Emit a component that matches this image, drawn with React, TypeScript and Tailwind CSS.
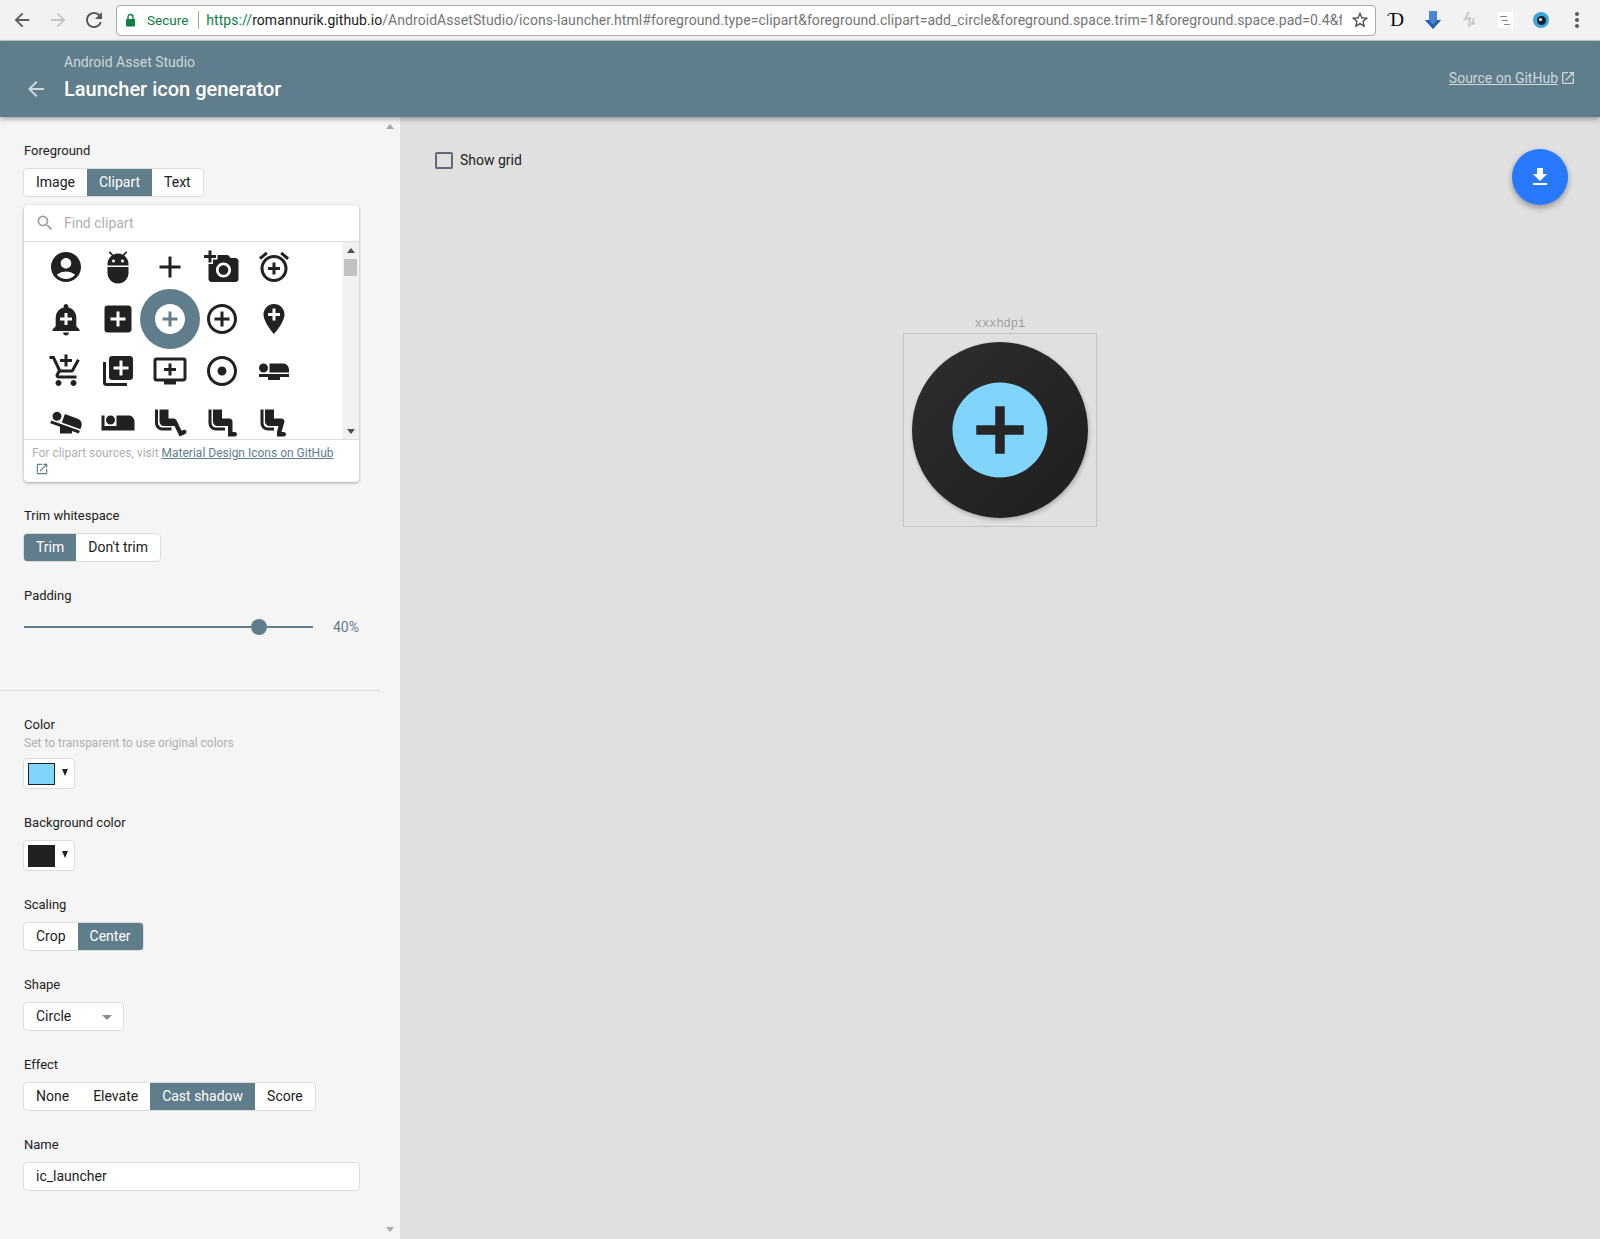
import {
  MdAccountCircle,
  MdAdb,
  MdAdd,
  MdAddAPhoto,
  MdAddAlarm,
  MdAddAlert,
  MdAddBox,
  MdAddCircle,
  MdAddCircleOutline,
  MdAddLocation,
  MdAddShoppingCart,
  MdAddToPhotos,
  MdAddToQueue,
  MdAdjust,
  MdAirlineSeatFlat,
  MdAirlineSeatFlatAngled,
  MdAirlineSeatIndividualSuite,
  MdAirlineSeatLegroomExtra,
  MdAirlineSeatLegroomNormal,
  MdAirlineSeatLegroomReduced,
  MdArrowBack,
  MdArrowForward,
  MdFileDownload,
  MdMoreVert,
  MdOpenInNew,
  MdRefresh,
  MdSearch,
  MdStarBorder,
} from "react-icons/md";

const clipart = [
  MdAccountCircle,
  MdAdb,
  MdAdd,
  MdAddAPhoto,
  MdAddAlarm,
  MdAddAlert,
  MdAddBox,
  MdAddCircle,
  MdAddCircleOutline,
  MdAddLocation,
  MdAddShoppingCart,
  MdAddToPhotos,
  MdAddToQueue,
  MdAdjust,
  MdAirlineSeatFlat,
  MdAirlineSeatFlatAngled,
  MdAirlineSeatIndividualSuite,
  MdAirlineSeatLegroomExtra,
  MdAirlineSeatLegroomNormal,
  MdAirlineSeatLegroomReduced,
];

function Label({ children, className }: { children: string; className: string }) {
  return <div className={`h-4 text-[13px] leading-4 text-[#212121] ${className}`}>{children}</div>;
}

interface SegmentsProps {
  items: string[];
  selected: string;
}

function Segments({ items, selected }: SegmentsProps) {
  return (
    <div className="-ml-px mt-[9px] flex h-[29px] w-fit overflow-hidden rounded-sm border border-[#dcdcdc] bg-white">
      {items.map((item) => (
        <div
          key={item}
          className={
            item === selected
              ? "flex items-center bg-[#607d8b] px-3 pb-[2px] text-sm text-white"
              : "flex items-center px-3 pb-[2px] text-sm text-[#212121]"
          }
        >
          {item}
        </div>
      ))}
    </div>
  );
}

function ColorButton({ color }: { color: string }) {
  return (
    <div className="-ml-px mt-[9px] flex h-[31px] w-[52px] items-center rounded-sm border border-[#dcdcdc] bg-white pl-1">
      <div
        className={
          color === "blue"
            ? "h-[22px] w-[27px] border border-[#212121] bg-[#81d4fa]"
            : "h-[22px] w-[27px] border border-[#212121] bg-[#212121]"
        }
      />
      <div className="mb-[2px] ml-[7px] h-0 w-0 border-x-[3.5px] border-t-[7px] border-x-transparent border-t-[#212121]" />
    </div>
  );
}

function BrowserBar() {
  return (
    <div className="flex h-[41px] items-center border-b border-[#c8c8c8] bg-[#f2f2f2]">
      <div className="flex w-[116px] items-center pl-[11px] text-[#5a5a5a]">
        <MdArrowBack size={22} />
        <MdArrowForward size={22} className="ml-[14px] text-[#c4c4c4]" />
        <MdRefresh size={24} className="ml-[13px]" />
      </div>
      <div className="flex h-[31px] w-[1260px] items-center rounded-sm border border-[#a9a9a9] bg-white text-[14px]">
        <svg width="11" height="14" viewBox="0 0 11 14" className="ml-[8px]">
          <path d="M3 6V4a2.5 2.5 0 015 0v2" fill="none" stroke="#0b8043" strokeWidth="1.4" />
          <rect x="1" y="6" width="9" height="7.5" rx="1" fill="#0b8043" />
        </svg>
        <span className="ml-[11px] text-[13.5px] text-[#0b8043]">Secure</span>
        <div className="ml-[10px] h-[18px] w-px bg-[#9e9e9e]" />
        <div className="ml-[7px] w-[1136px] overflow-hidden whitespace-nowrap tracking-[0.06px] text-[#757575]">
          <span className="text-[#0b8043]">https://</span>
          <span className="text-[#212121]">romannurik.github.io</span>
          /AndroidAssetStudio/icons-launcher.html#foreground.type=clipart&amp;foreground.clipart=add_circle&amp;foreground.space.trim=1&amp;foreground.space.pad=0.4&amp;f
        </div>
        <MdStarBorder size={20} className="ml-[8px] text-[#4a4a4a]" />
      </div>
      <div className="flex flex-1 items-center pl-[3px]">
        <div className="flex w-9 justify-center">
          <div className="relative h-5 w-5 text-center font-['Liberation_Serif'] text-[19px] leading-5 text-black">
            D
            <svg width="8" height="5" viewBox="0 0 8 5" className="absolute left-0 top-[2px]">
              <path d="M1 4c0-3 3-3 6-2" fill="none" stroke="#000" strokeWidth="1" />
            </svg>
          </div>
        </div>
        <div className="flex w-9 justify-center">
          <svg width="16" height="20" viewBox="0 0 16 20">
            <path d="M4 1h8v9h4l-8 9-8-9h4z" fill="#4a86d0" />
            <path d="M0 10h4l4 5 4-5h4l-8 9z" fill="#1f5fae" />
          </svg>
        </div>
        <div className="flex w-9 justify-center">
          <svg width="14" height="18" viewBox="0 0 14 18" fill="none" stroke="#c9c9c9" strokeWidth="2">
            <path d="M7 1l-4 7 5-1-1 9M12 7l-2 6 3-1" />
          </svg>
        </div>
        <div className="flex w-9 justify-center">
          <div className="flex h-4 w-[15px] flex-col items-center justify-center gap-[3px] bg-white">
            <div className="mr-1 h-px w-[7px] bg-[#888]" />
            <div className="h-px w-[6px] bg-[#888]" />
            <div className="ml-1 h-px w-[6px] bg-[#888]" />
          </div>
        </div>
        <div className="flex w-9 justify-center">
          <div className="flex h-4 w-4 items-center justify-center rounded-full bg-[#3da5d9]">
            <div className="flex h-[9px] w-[9px] items-start justify-start rounded-full bg-[#12242e] pl-[2px] pt-[2px]">
              <div className="h-[3px] w-[3px] rounded-full bg-white" />
            </div>
          </div>
        </div>
        <div className="flex w-9 justify-center">
          <MdMoreVert size={24} className="text-[#5a5a5a]" />
        </div>
      </div>
    </div>
  );
}

function PageHeader() {
  return (
    <header className="relative z-10 flex h-[76px] items-start justify-between bg-[#607d8b] pr-6 pt-[11px] shadow-[0_2px_5px_rgba(0,0,0,0.35)]">
      <div className="flex items-end">
        <MdArrowBack size={24} className="mb-px ml-[24px] text-[#cfd8dc]" />
        <div className="ml-[16px]">
          <div className="text-sm leading-5 text-white/70">Android Asset Studio</div>
          <div className="mt-1 text-xl font-medium leading-[26px] text-white">Launcher icon generator</div>
        </div>
      </div>
      <div className="mt-4 flex items-center text-sm text-white/70">
        <span className="underline">Source on GitHub</span>
        <MdOpenInNew size={16} className="ml-[2px]" />
      </div>
    </header>
  );
}

function ClipartPicker() {
  return (
    <div className="mt-2 w-[335px] rounded-sm bg-white shadow-[0_1px_3px_rgba(0,0,0,0.35)]">
      <div className="flex h-[37px] items-center border-b border-[#dcdcdc] pl-[11px]">
        <MdSearch size={20} className="text-[#9e9e9e]" />
        <span className="ml-[9px] text-sm text-[#b0b0b0]">Find clipart</span>
      </div>
      <div className="flex h-[198px] border-b border-[#dcdcdc]">
        <div className="flex-1 overflow-hidden pl-4">
          <div className="-mt-px grid grid-cols-[repeat(5,52px)] auto-rows-[52px]">
            {clipart.map((Icon, i) =>
              i === 7 ? (
                <div key={i} className="flex items-center justify-center">
                  <div className="flex h-[60px] w-[60px] shrink-0 items-center justify-center rounded-full bg-[#607d8b]">
                    <Icon size={36} className="text-white" />
                  </div>
                </div>
              ) : (
                <div key={i} className="flex items-center justify-center">
                  <Icon size={36} className="text-[#212121]" />
                </div>
              ),
            )}
          </div>
        </div>
        <div className="flex w-[17px] flex-col items-center bg-[#f1f1f1]">
          <div className="mt-[6px] h-0 w-0 border-x-4 border-b-[5px] border-x-transparent border-b-[#505050]" />
          <div className="mt-[6px] h-[17px] w-[13px] bg-[#c1c1c1]" />
          <div className="mb-[5px] mt-auto h-0 w-0 border-x-4 border-t-[5px] border-x-transparent border-t-[#505050]" />
        </div>
      </div>
      <div className="h-[42px] px-2 pt-[5px] text-xs leading-4 text-[#b0b0b0]">
        For clipart sources, visit <span className="text-[#607d8b] underline">Material Design Icons on GitHub</span>
        <MdOpenInNew size={14} className="ml-[3px] mt-[1px] text-[#607d8b]" />
      </div>
    </div>
  );
}

function Sidebar() {
  return (
    <aside className="flex w-[400px] shrink-0 bg-[#f5f5f5] shadow-[1px_0_3px_rgba(0,0,0,0.25)]">
      <div className="w-[380px]">
        <div className="pl-6 pr-[21px] pt-[26px]">
          <Label className="">Foreground</Label>
          <Segments items={["Image", "Clipart", "Text"]} selected="Clipart" />
          <ClipartPicker />
          <Label className="mt-[26px]">Trim whitespace</Label>
          <Segments items={["Trim", "Don't trim"]} selected="Trim" />
          <Label className="mt-[26px]">Padding</Label>
          <div className="mt-[15px] flex h-4 items-center">
            <div className="flex h-4 w-[289px] items-center">
              <div className="h-0.5 w-[227px] bg-[#607d8b]" />
              <div className="h-4 w-4 rounded-full bg-[#607d8b]" />
              <div className="h-0.5 flex-1 bg-[#607d8b]" />
            </div>
            <div className="ml-auto text-sm text-[#607d8b]">40%</div>
          </div>
        </div>
        <div className="mt-[55px] h-px bg-[#dcdcdc]" />
        <div className="pl-6 pr-[21px] pt-[26px]">
          <Label className="">Color</Label>
          <div className="mt-[2px] text-xs leading-4 text-[#b0b0b0]">Set to transparent to use original colors</div>
          <div className="-mt-[2px]">
            <ColorButton color="blue" />
          </div>
          <Label className="mt-[26px]">Background color</Label>
          <ColorButton color="dark" />
          <Label className="mt-[26px]">Scaling</Label>
          <Segments items={["Crop", "Center"]} selected="Center" />
          <Label className="mt-[26px]">Shape</Label>
          <div className="-ml-px mt-[9px] flex h-[29px] w-[101px] items-center rounded-sm border border-[#dcdcdc] bg-white pb-[2px] pl-3 text-sm text-[#212121]">
            Circle
            <div className="ml-auto mr-[11px] mt-[3px] h-0 w-0 border-x-[5px] border-t-[5px] border-x-transparent border-t-[#8a8a8a]" />
          </div>
          <Label className="mt-[26px]">Effect</Label>
          <Segments items={["None", "Elevate", "Cast shadow", "Score"]} selected="Cast shadow" />
          <Label className="mt-[26px]">Name</Label>
          <div className="-ml-px mt-[9px] flex h-[29px] w-[337px] items-center rounded-sm border border-[#dcdcdc] bg-white pb-[2px] pl-3 text-sm text-[#212121]">
            ic_launcher
          </div>
        </div>
      </div>
      <div className="flex w-5 flex-col items-center justify-between py-[7px]">
        <div className="h-0 w-0 border-x-4 border-b-[5px] border-x-transparent border-b-[#a8a8a8]" />
        <div className="h-0 w-0 border-x-4 border-t-[5px] border-x-transparent border-t-[#a8a8a8]" />
      </div>
    </aside>
  );
}

function Preview() {
  return (
    <main className="flex-1 bg-[#e0e0e0] pl-[35px] pr-[32px] pt-[32px]">
      <div className="flex items-start justify-between">
        <div className="mt-[1px] flex items-center">
          <div className="h-[17px] w-[18px] rounded-[2px] border-2 border-[#66667a]" />
          <span className="ml-[7px] text-sm text-[#212121]">Show grid</span>
        </div>
        <div className="flex h-14 w-14 items-center justify-center rounded-full bg-[#2979ff] shadow-[0_3px_6px_rgba(0,0,0,0.35)]">
          <MdFileDownload size={24} className="text-white" />
        </div>
      </div>
      <div className="ml-[468px] mt-[111px] w-[194px]">
        <div className="text-center font-['Liberation_Mono'] text-xs leading-4 text-[#9e9e9e]">xxxhdpi</div>
        <div className="mt-[1px] flex h-[194px] items-center justify-center border border-[#c4c4c4]">
          <div className="flex h-[176px] w-[176px] items-center justify-center rounded-full bg-gradient-to-br from-[#2e2e2e] to-[#1e1e1e] shadow-[1px_2px_4px_rgba(0,0,0,0.25)]">
            <MdAddCircle size={114} className="text-[#81d4fa]" />
          </div>
        </div>
      </div>
    </main>
  );
}

export default function App() {
  return (
    <div className="flex h-[1239px] w-[1600px] flex-col overflow-hidden font-['Roboto',sans-serif]">
      <BrowserBar />
      <PageHeader />
      <div className="flex flex-1 overflow-hidden">
        <Sidebar />
        <Preview />
      </div>
    </div>
  );
}
